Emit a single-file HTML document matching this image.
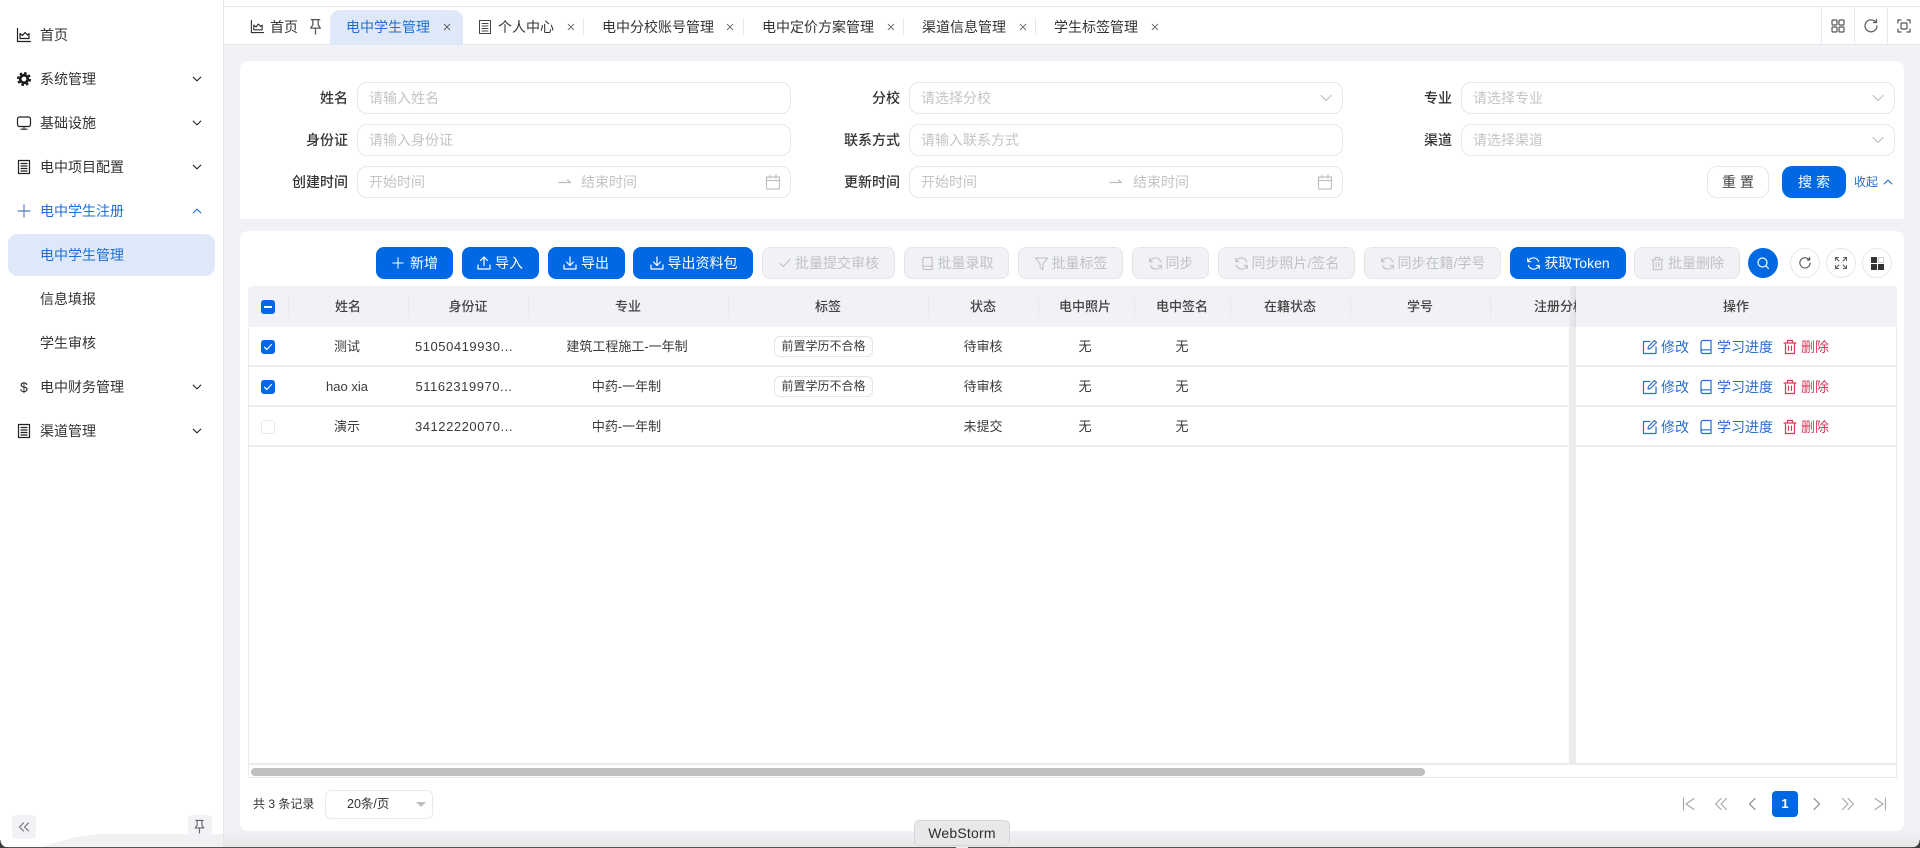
<!DOCTYPE html>
<html lang="zh-CN"><head><meta charset="utf-8"><title>电中学生管理</title>
<style>
html,body{margin:0;padding:0;width:1920px;height:848px;overflow:hidden;background:#f0f2f6}
body{position:relative;font-family:"Liberation Sans","Noto Sans CJK SC",sans-serif;font-size:14px;color:#333;filter:blur(.3px)}
.a{position:absolute}
.t{position:absolute;line-height:20px;height:20px;white-space:nowrap}
.c{transform:translateX(-50%)}
.r{transform:translateX(-100%)}
.m{font-weight:500}
svg.i{position:absolute;fill:none;stroke:currentColor;stroke-width:1.2;stroke-linecap:round;stroke-linejoin:round;overflow:visible}
.inp{position:absolute;height:30px;border:1px solid #e6e7ea;border-radius:10px;background:#fff;box-sizing:content-box}
.ph{color:#c4c4c4}
.b{position:absolute;top:247px;height:32px;box-sizing:border-box;border-radius:8px;display:flex;align-items:center;justify-content:center;gap:3px;background:#0068e3;color:#fff;line-height:1}
.b svg{position:static;flex:none}
.b svg.i{position:static}
.d{background:#f0f2f6;border:1px solid #e3e5e9;color:#c0c2c6}
.sep{position:absolute;width:1px;background:#e6e8ec}
.th{position:absolute;top:297px;line-height:20px;font-size:13px;font-weight:500;color:#444;transform:translateX(-50%);white-space:nowrap}
.td{position:absolute;line-height:20px;font-size:13px;color:#3a3a3a;transform:translateX(-50%);white-space:nowrap}
.tag{position:absolute;left:774px;width:99px;height:21px;box-sizing:border-box;border:1px solid #e4e5e8;border-radius:6px;background:#fff;font-size:12px;line-height:19px;text-align:center;color:#3a3a3a}
.blue{color:#2a6fca}.red{color:#d83c5c}
.line{position:absolute;left:249px;width:1647px;height:2px;background:#eceef1}
.cb{position:absolute;left:261px;width:14px;height:14px;border-radius:3px;background:#0068e3}
.rb{position:absolute;top:248px;width:28px;height:28px;border:1px solid #e6e7ea;border-radius:50%;background:#fff}
</style></head><body>
<svg width="0" height="0" style="position:absolute"><defs>
<symbol id="chart" viewBox="0 0 16 16"><path d="M1.500 1.500V14.500H14.500M4 11.500V6.500L6.500 8.500 9 5.500 11.500 8 13 6.500V11.500H4Z"/></symbol>
<symbol id="mon" viewBox="0 0 16 16"><rect x="1.500" y="2" width="13" height="9.500" rx="2"/><path d="M8 11.500V14M5 14.200H11"/></symbol>
<symbol id="doc" viewBox="0 0 16 16"><rect x="2.500" y="1.500" width="11" height="13"/><path d="M5 4.500H11M5 7H11M5 9.500H11M5 12H11"/></symbol>
<symbol id="plus" viewBox="0 0 16 16"><path d="M8 2V14M2 8H14"/></symbol>
<symbol id="dn" viewBox="0 0 16 16"><path d="M3 5.500 8 10.500 13 5.500"/></symbol>
<symbol id="up" viewBox="0 0 16 16"><path d="M3 10.500 8 5.500 13 10.500"/></symbol>
<symbol id="x" viewBox="0 0 10 10"><path d="M1.500 1.500 8.500 8.500M8.500 1.500 1.500 8.500"/></symbol>
<symbol id="pin" viewBox="0 0 16 16"><path d="M4 1.500H12M5.500 1.500V6.500L3.500 9.500H12.500L10.500 6.500V1.500M8 9.500V15"/></symbol>
<symbol id="ul" viewBox="0 0 16 16"><path d="M8 10.500V2M4.500 5.500 8 2 11.500 5.500M2 10V14H14V10"/></symbol>
<symbol id="dl" viewBox="0 0 16 16"><path d="M8 2V10.500M4.500 7 8 10.500 11.500 7M2 10V14H14V10"/></symbol>
<symbol id="ck" viewBox="0 0 16 16"><path d="M2.500 8.500 6 12 13.500 4"/></symbol>
<symbol id="book" viewBox="0 0 16 16"><path d="M3 3.500A2 2 0 0 1 5 1.500H13V14.500H5A2 2 0 0 1 3 12.500ZM3 12.500A2 2 0 0 1 5 10.800H13"/></symbol>
<symbol id="flt" viewBox="0 0 16 16"><path d="M1.500 2H14.500L9.500 8.500V14.500L6.500 12.500V8.500Z"/></symbol>
<symbol id="sync" viewBox="0 0 16 16"><path d="M13.500 6A6 6 0 0 0 3 4.500L1.800 6M2.500 10A6 6 0 0 0 13 11.500L14.200 10M1.800 2.500V6H5M14.200 13.500V10H11"/></symbol>
<symbol id="tr" viewBox="0 0 16 16"><path d="M3.500 4V14.500H12.500V4M2 4H14M5.500 4V1.500H10.500V4M6.500 7V11.500M9.500 7V11.500"/></symbol>
<symbol id="ed" viewBox="0 0 16 16"><path d="M14 8V14.500H1.500V2.500H8M6 10 6.500 7.500 12.500 1.500 14.500 3.500 8.500 9.500Z"/></symbol>
<symbol id="cal" viewBox="0 0 16 16"><rect x="1.500" y="3" width="13" height="12" rx="1"/><path d="M1.500 6.500H14.500M5 1V4M11 1V4"/></symbol>
</defs></svg>

<!-- top bar -->
<div class="a" style="left:223px;top:0;width:1697px;height:7px;background:#fff;border-bottom:1px solid #e5e7eb;box-sizing:border-box"></div>
<div class="a" style="left:223px;top:7px;width:1697px;height:38px;background:#fff;border-bottom:1px solid #e5e7eb;box-sizing:border-box"></div>

<!-- sidebar -->
<div class="a" style="left:0;top:0;width:223px;height:848px;background:#fff;border-right:1px solid #e4e6ea;box-sizing:content-box"></div>
<svg class="i" style="left:16px;top:27px;color:#222" width="16" height="16"><use href="#chart"/></svg>
<div class="t" style="left:40px;top:25px">首页</div>
<svg class="a" style="left:17px;top:72px" width="14" height="14" viewBox="0 0 14 14"><circle cx="7" cy="7" r="3.800" fill="none" stroke="#1d1d1d" stroke-width="2.800"/><circle cx="7" cy="7" r="6" fill="none" stroke="#1d1d1d" stroke-width="2" stroke-dasharray="2.600 2.100"/></svg>
<div class="t" style="left:40px;top:69px">系统管理</div>
<svg class="i" style="left:16px;top:115px;color:#222" width="16" height="16"><use href="#mon"/></svg>
<div class="t" style="left:40px;top:113px">基础设施</div>
<svg class="i" style="left:16px;top:159px;color:#222" width="16" height="16"><use href="#doc"/></svg>
<div class="t" style="left:40px;top:157px">电中项目配置</div>
<svg class="i" style="left:16px;top:203px;color:#557fbb" width="16" height="16"><use href="#plus"/></svg>
<div class="t" style="left:40px;top:201px;color:#1e6fd6">电中学生注册</div>
<div class="a" style="left:8px;top:234px;width:207px;height:42px;border-radius:10px;background:#dfe8f8"></div>
<div class="t" style="left:40px;top:245px;color:#1e6fd6">电中学生管理</div>
<div class="t" style="left:40px;top:289px">信息填报</div>
<div class="t" style="left:40px;top:333px">学生审核</div>
<div class="t" style="left:20px;top:377px;color:#222">$</div>
<div class="t" style="left:40px;top:377px">电中财务管理</div>
<svg class="i" style="left:16px;top:423px;color:#222" width="16" height="16"><use href="#doc"/></svg>
<div class="t" style="left:40px;top:421px">渠道管理</div>
<svg class="i" style="left:191px;top:73px;color:#222;stroke-width:1.500" width="12" height="12"><use href="#dn"/></svg>
<svg class="i" style="left:191px;top:117px;color:#222;stroke-width:1.500" width="12" height="12"><use href="#dn"/></svg>
<svg class="i" style="left:191px;top:161px;color:#222;stroke-width:1.500" width="12" height="12"><use href="#dn"/></svg>
<svg class="i" style="left:191px;top:205px;color:#1e6fd6;stroke-width:1.500" width="12" height="12"><use href="#up"/></svg>
<svg class="i" style="left:191px;top:381px;color:#222;stroke-width:1.500" width="12" height="12"><use href="#dn"/></svg>
<svg class="i" style="left:191px;top:425px;color:#222;stroke-width:1.500" width="12" height="12"><use href="#dn"/></svg>
<div class="a" style="left:40px;top:834px;width:183px;height:13px;background:#f0f1f3;clip-path:polygon(0 100%,35px 25%,60px 0,100% 0,100% 100%)"></div>
<div class="a" style="left:12px;top:815px;width:24px;height:24px;border-radius:4px;background:#f0f2f6"></div>
<svg class="i" style="left:19px;top:822px;color:#777" width="10" height="10" viewBox="0 0 10 10"><path d="M4.500 1 .5 5 4.500 9M9.500 1 5.500 5 9.500 9"/></svg>
<div class="a" style="left:188px;top:815px;width:24px;height:24px;border-radius:4px;background:#f0f2f6"></div>
<svg class="i" style="left:192px;top:819px;color:#666" width="15" height="15"><use href="#pin"/></svg>

<!-- tabs -->
<svg class="i" style="left:250px;top:19px;color:#333" width="15" height="15"><use href="#chart"/></svg>
<div class="t" style="left:270px;top:17px">首页</div>
<svg class="i" style="left:307px;top:18px;color:#555" width="17" height="17"><use href="#pin"/></svg>
<div class="a" style="left:330px;top:10px;width:133px;height:35px;border-radius:10px 10px 0 0;background:#dfe8f8"></div>
<div class="t" style="left:346px;top:17px;color:#1e6fd6">电中学生管理</div>
<svg class="i" style="left:443px;top:23px;color:#555" width="8" height="8"><use href="#x"/></svg>
<svg class="i" style="left:477px;top:19px;color:#444;stroke-width:1" width="16" height="16"><use href="#doc"/></svg>
<div class="t" style="left:498px;top:17px">个人中心</div>
<svg class="i" style="left:567px;top:23px;color:#666" width="8" height="8"><use href="#x"/></svg>
<div class="sep" style="left:583px;top:18px;height:17px"></div>
<div class="t" style="left:602px;top:17px">电中分校账号管理</div>
<svg class="i" style="left:726px;top:23px;color:#666" width="8" height="8"><use href="#x"/></svg>
<div class="sep" style="left:743px;top:18px;height:17px"></div>
<div class="t" style="left:762px;top:17px">电中定价方案管理</div>
<svg class="i" style="left:887px;top:23px;color:#666" width="8" height="8"><use href="#x"/></svg>
<div class="sep" style="left:903px;top:18px;height:17px"></div>
<div class="t" style="left:922px;top:17px">渠道信息管理</div>
<svg class="i" style="left:1019px;top:23px;color:#666" width="8" height="8"><use href="#x"/></svg>
<div class="sep" style="left:1035px;top:18px;height:17px"></div>
<div class="t" style="left:1054px;top:17px">学生标签管理</div>
<svg class="i" style="left:1151px;top:23px;color:#666" width="8" height="8"><use href="#x"/></svg>
<div class="sep" style="left:1821px;top:7px;height:37px"></div>
<div class="sep" style="left:1854px;top:7px;height:37px"></div>
<div class="sep" style="left:1887px;top:7px;height:37px"></div>
<svg class="i" style="left:1831px;top:19px;color:#555" width="14" height="14" viewBox="0 0 14 14"><rect x="1" y="1" width="5" height="5" rx="1"/><rect x="8" y="1" width="5" height="5" rx="1"/><rect x="1" y="8" width="5" height="5" rx="1"/><rect x="8" y="8" width="5" height="5" rx="1"/></svg>
<svg class="i" style="left:1864px;top:19px;color:#555" width="14" height="14" viewBox="0 0 14 14"><path d="M12 3.500A6 6 0 1 0 13 7M12.500 .5V3.500H9.500"/></svg>
<svg class="i" style="left:1897px;top:19px;color:#555" width="14" height="14" viewBox="0 0 14 14"><path d="M1 4V1H4M10 1H13V4M13 10V13H10M4 13H1V10"/><rect x="4" y="4" width="6" height="6" rx="1"/></svg>

<!-- search card -->
<div class="a" style="left:240px;top:61px;width:1664px;height:158px;background:#fff;border-radius:8px 8px 0 0"></div>
<div class="t m r" style="left:348px;top:88px">姓名</div>
<div class="t m r" style="left:348px;top:130px">身份证</div>
<div class="t m r" style="left:348px;top:172px">创建时间</div>
<div class="inp" style="left:357px;top:82px;width:432px"></div>
<div class="inp" style="left:357px;top:124px;width:432px"></div>
<div class="inp" style="left:357px;top:166px;width:432px"></div>
<div class="t ph" style="left:369px;top:88px">请输入姓名</div>
<div class="t ph" style="left:369px;top:130px">请输入身份证</div>
<div class="t ph" style="left:369px;top:172px">开始时间</div>
<svg class="i" style="left:559px;top:178px;color:#bbb" width="12" height="8" viewBox="0 0 12 8"><path d="M0 4.500H11.500L8.500 2"/></svg>
<div class="t ph" style="left:581px;top:172px">结束时间</div>
<svg class="i" style="left:765px;top:174px;color:#c0c0c0" width="16" height="16"><use href="#cal"/></svg>

<div class="t m r" style="left:900px;top:88px">分校</div>
<div class="t m r" style="left:900px;top:130px">联系方式</div>
<div class="t m r" style="left:900px;top:172px">更新时间</div>
<div class="inp" style="left:909px;top:82px;width:432px"></div>
<div class="inp" style="left:909px;top:124px;width:432px"></div>
<div class="inp" style="left:909px;top:166px;width:432px"></div>
<div class="t ph" style="left:921px;top:88px">请选择分校</div>
<div class="t ph" style="left:921px;top:130px">请输入联系方式</div>
<div class="t ph" style="left:921px;top:172px">开始时间</div>
<svg class="i" style="left:1110px;top:178px;color:#bbb" width="12" height="8" viewBox="0 0 12 8"><path d="M0 4.500H11.500L8.500 2"/></svg>
<div class="t ph" style="left:1133px;top:172px">结束时间</div>
<svg class="i" style="left:1317px;top:174px;color:#c0c0c0" width="16" height="16"><use href="#cal"/></svg>
<svg class="i" style="left:1318px;top:90px;color:#c0c0c0" width="16" height="16"><use href="#dn"/></svg>

<div class="t m r" style="left:1452px;top:88px">专业</div>
<div class="t m r" style="left:1452px;top:130px">渠道</div>
<div class="inp" style="left:1461px;top:82px;width:432px"></div>
<div class="inp" style="left:1461px;top:124px;width:432px"></div>
<div class="t ph" style="left:1473px;top:88px">请选择专业</div>
<div class="t ph" style="left:1473px;top:130px">请选择渠道</div>
<svg class="i" style="left:1870px;top:90px;color:#c0c0c0" width="16" height="16"><use href="#dn"/></svg>
<svg class="i" style="left:1870px;top:132px;color:#c0c0c0" width="16" height="16"><use href="#dn"/></svg>
<div class="a" style="left:1707px;top:166px;width:62px;height:32px;box-sizing:border-box;border:1px solid #e6e7ea;border-radius:10px;background:#fff;text-align:center;line-height:30px;letter-spacing:4px;text-indent:4px;color:#444">重置</div>
<div class="a" style="left:1782px;top:166px;width:64px;height:32px;border-radius:10px;background:#0068e3;color:#fff;text-align:center;line-height:32px;letter-spacing:4px;text-indent:4px">搜索</div>
<div class="t" style="left:1854px;top:172px;font-size:12px;color:#1e6fd6">收起</div>
<svg class="i" style="left:1882px;top:176px;color:#1e6fd6;stroke-width:1.500" width="12" height="12"><use href="#up"/></svg>

<!-- table card -->
<div class="a" style="left:240px;top:231px;width:1664px;height:600px;background:#fff;border-radius:8px 8px 8px 8px"></div>

<!-- toolbar -->
<div class="b" style="left:376px;width:77px;gap:5px"><svg class="i" width="14" height="14"><use href="#plus"/></svg><span>新增</span></div>
<div class="b" style="left:462px;width:77px;padding-right:2px"><svg class="i" width="16" height="16"><use href="#ul"/></svg><span>导入</span></div>
<div class="b" style="left:548px;width:77px;padding-right:2px"><svg class="i" width="16" height="16"><use href="#dl"/></svg><span>导出</span></div>
<div class="b" style="left:633px;width:120px"><svg class="i" width="16" height="16"><use href="#dl"/></svg><span>导出资料包</span></div>
<div class="b d" style="left:762px;width:133px"><svg class="i" width="14" height="14"><use href="#ck"/></svg><span>批量提交审核</span></div>
<div class="b d" style="left:904px;width:105px"><svg class="i" width="15" height="15"><use href="#book"/></svg><span>批量录取</span></div>
<div class="b d" style="left:1018px;width:105px"><svg class="i" width="15" height="15"><use href="#flt"/></svg><span>批量标签</span></div>
<div class="b d" style="left:1132px;width:77px"><svg class="i" width="15" height="15"><use href="#sync"/></svg><span>同步</span></div>
<div class="b d" style="left:1218px;width:137px"><svg class="i" width="15" height="15"><use href="#sync"/></svg><span>同步照片/签名</span></div>
<div class="b d" style="left:1364px;width:137px"><svg class="i" width="15" height="15"><use href="#sync"/></svg><span>同步在籍/学号</span></div>
<div class="b" style="left:1510px;width:116px"><svg class="i" width="15" height="15"><use href="#sync"/></svg><span>获取Token</span></div>
<div class="b d" style="left:1634px;width:106px"><svg class="i" width="15" height="15"><use href="#tr"/></svg><span>批量删除</span></div>
<div class="a" style="left:1748px;top:248px;width:30px;height:30px;border-radius:50%;background:#0068e3"></div>
<svg class="i" style="left:1757px;top:257px;color:#fff" width="12" height="12" viewBox="0 0 12 12"><circle cx="5.500" cy="5.500" r="4.500"/><path d="M9 9 11.500 11.500"/></svg>
<div class="rb" style="left:1790px"></div>
<svg class="i" style="left:1799px;top:257px;color:#444" width="12" height="12" viewBox="0 0 14 14"><path d="M12 3.500A6 6 0 1 0 13 7M12.500 .5V3.500H9.500"/></svg>
<div class="rb" style="left:1826px"></div>
<svg class="i" style="left:1835px;top:257px;color:#555;stroke-width:1" width="12" height="12" viewBox="0 0 12 12"><path d="M0.500 3.500V.5H3.500M.5 .5 4 4M11.500 3.500V.5H8.500M11.500 .5 8 4M.5 8.500V11.500H3.500M.5 11.500 4 8M11.500 8.500V11.500H8.500M11.500 11.500 8 8"/></svg>
<div class="rb" style="left:1862px"></div>
<svg class="a" style="left:1871px;top:257px" width="13" height="13" viewBox="0 0 13 13"><rect width="6" height="6" fill="#333"/><rect x="7.500" y=".5" width="5" height="5" fill="none" stroke="#888" stroke-width=".8" stroke-dasharray="1 1"/><rect y="7" width="6" height="6" fill="#333"/><rect x="7" y="7" width="6" height="6" fill="#333"/></svg>

<!-- table -->
<div class="a" style="left:248px;top:286px;width:1649px;height:492px;box-sizing:border-box;border:1px solid #e9ebef;border-top:0;border-radius:4px 4px 0 0"></div>
<div class="a" style="left:248px;top:286px;width:1649px;height:41px;background:#f0f2f6;border-radius:4px 4px 0 0"></div>
<div class="cb" style="top:300px"></div><div class="a" style="left:264px;top:306px;width:8px;height:2px;background:#fff"></div>
<div class="sep" style="left:288px;top:297px;height:20px"></div>
<div class="sep" style="left:408px;top:297px;height:20px"></div>
<div class="sep" style="left:528px;top:297px;height:20px"></div>
<div class="sep" style="left:728px;top:297px;height:20px"></div>
<div class="sep" style="left:928px;top:297px;height:20px"></div>
<div class="sep" style="left:1038px;top:297px;height:20px"></div>
<div class="sep" style="left:1134px;top:297px;height:20px"></div>
<div class="sep" style="left:1230px;top:297px;height:20px"></div>
<div class="sep" style="left:1350px;top:297px;height:20px"></div>
<div class="sep" style="left:1490px;top:297px;height:20px"></div>
<div class="th" style="left:348px">姓名</div>
<div class="th" style="left:468px">身份证</div>
<div class="th" style="left:628px">专业</div>
<div class="th" style="left:828px">标签</div>
<div class="th" style="left:983px">状态</div>
<div class="th" style="left:1085px">电中照片</div>
<div class="th" style="left:1182px">电中签名</div>
<div class="th" style="left:1290px">在籍状态</div>
<div class="th" style="left:1420px">学号</div>
<div class="th" style="left:1560px">注册分校</div>

<div class="line" style="top:365px"></div>
<div class="line" style="top:405px"></div>
<div class="line" style="top:445px"></div>

<div class="cb" style="top:340px"></div>
<svg class="i" style="left:263px;top:342px;color:#fff;stroke-width:2" width="10" height="10"><use href="#ck"/></svg>
<div class="cb" style="top:380px"></div>
<svg class="i" style="left:263px;top:382px;color:#fff;stroke-width:2" width="10" height="10"><use href="#ck"/></svg>
<div class="a" style="left:261px;top:420px;width:12px;height:12px;border:1px solid #e8e9ec;border-radius:3px;background:#fff"></div>

<div class="td" style="left:347px;top:337px">测试</div>
<div class="td" style="left:347px;top:377px">hao xia</div>
<div class="td" style="left:347px;top:417px">演示</div>
<div class="td" style="left:464px;top:337px;letter-spacing:.55px">51050419930...</div>
<div class="td" style="left:464px;top:377px;letter-spacing:.55px">51162319970...</div>
<div class="td" style="left:464px;top:417px;letter-spacing:.55px">34122220070...</div>
<div class="td" style="left:627px;top:337px">建筑工程施工-一年制</div>
<div class="td" style="left:626.500px;top:377px">中药-一年制</div>
<div class="td" style="left:626.500px;top:417px">中药-一年制</div>
<div class="tag" style="top:336px">前置学历不合格</div>
<div class="tag" style="top:376px">前置学历不合格</div>
<div class="td" style="left:983px;top:337px">待审核</div>
<div class="td" style="left:983px;top:377px">待审核</div>
<div class="td" style="left:983px;top:417px">未提交</div>
<div class="td" style="left:1085px;top:337px">无</div>
<div class="td" style="left:1085px;top:377px">无</div>
<div class="td" style="left:1085px;top:417px">无</div>
<div class="td" style="left:1182px;top:337px">无</div>
<div class="td" style="left:1182px;top:377px">无</div>
<div class="td" style="left:1182px;top:417px">无</div>

<!-- fixed column -->
<div class="a" style="left:1576px;top:286px;width:320px;height:41px;background:#f0f2f6;border-radius:0 4px 0 0"></div>
<div class="a" style="left:1569px;top:286px;width:7px;height:41px;background:linear-gradient(to right,rgba(0,0,0,.02),rgba(0,0,0,.08))"></div>
<div class="a" style="left:1569px;top:327px;width:7px;height:436px;background:#ebecee"></div>
<div class="th" style="left:1736px">操作</div>

<svg class="i blue" style="left:1642px;top:339px" width="16" height="16"><use href="#ed"/></svg>
<div class="t blue" style="left:1661px;top:337px">修改</div>
<svg class="i blue" style="left:1698px;top:339px" width="16" height="16"><use href="#book"/></svg>
<div class="t blue" style="left:1717px;top:337px">学习进度</div>
<svg class="i red" style="left:1782px;top:339px" width="16" height="16"><use href="#tr"/></svg>
<div class="t red" style="left:1801px;top:337px">删除</div>

<svg class="i blue" style="left:1642px;top:379px" width="16" height="16"><use href="#ed"/></svg>
<div class="t blue" style="left:1661px;top:377px">修改</div>
<svg class="i blue" style="left:1698px;top:379px" width="16" height="16"><use href="#book"/></svg>
<div class="t blue" style="left:1717px;top:377px">学习进度</div>
<svg class="i red" style="left:1782px;top:379px" width="16" height="16"><use href="#tr"/></svg>
<div class="t red" style="left:1801px;top:377px">删除</div>

<svg class="i blue" style="left:1642px;top:419px" width="16" height="16"><use href="#ed"/></svg>
<div class="t blue" style="left:1661px;top:417px">修改</div>
<svg class="i blue" style="left:1698px;top:419px" width="16" height="16"><use href="#book"/></svg>
<div class="t blue" style="left:1717px;top:417px">学习进度</div>
<svg class="i red" style="left:1782px;top:419px" width="16" height="16"><use href="#tr"/></svg>
<div class="t red" style="left:1801px;top:417px">删除</div>

<!-- scrollbar -->
<div class="a" style="left:249px;top:763px;width:1647px;height:2px;background:#e9ebef"></div>
<div class="a" style="left:251px;top:768px;width:1174px;height:8px;border-radius:4px;background:#bfbfbf"></div>

<!-- footer -->
<div class="t" style="left:253px;top:794px;font-size:12px;color:#333">共 3 条记录</div>
<div class="a" style="left:325px;top:790px;width:106px;height:27px;border:1px solid #e8e9ec;border-radius:6px;background:#fff"></div>
<div class="t" style="left:347px;top:794px;font-size:12.500px;color:#333">20条/页</div>
<div class="a" style="left:416px;top:802px;width:0;height:0;border-left:5px solid transparent;border-right:5px solid transparent;border-top:5px solid #bdbdbd"></div>
<svg class="i" style="left:1683px;top:798px;color:#aaa" width="12" height="12" viewBox="0 0 12 12"><path d="M.5 0V12M11 .5 3 6 11 11.500"/></svg>
<svg class="i" style="left:1715px;top:798px;color:#aaa" width="12" height="12" viewBox="0 0 12 12"><path d="M6 .5 .5 6 6 11.500M11.500 .5 6 6 11.500 11.500"/></svg>
<svg class="i" style="left:1749px;top:798px;color:#888" width="7" height="12" viewBox="0 0 7 12"><path d="M6 .5 .5 6 6 11.500"/></svg>
<div class="a" style="left:1772px;top:791px;width:26px;height:26px;border-radius:4px;background:#0068e3;color:#fff;text-align:center;line-height:26px;font-size:13px;font-weight:700">1</div>
<svg class="i" style="left:1813px;top:798px;color:#888" width="7" height="12" viewBox="0 0 7 12"><path d="M1 .5 6.500 6 1 11.500"/></svg>
<svg class="i" style="left:1842px;top:798px;color:#aaa" width="12" height="12" viewBox="0 0 12 12"><path d="M.5 .5 6 6 .5 11.500M6 .5 11.500 6 6 11.500"/></svg>
<svg class="i" style="left:1874px;top:798px;color:#aaa" width="12" height="12" viewBox="0 0 12 12"><path d="M11.500 0V12M1 .5 9 6 1 11.500"/></svg>

<!-- bottom edge / dock tooltip -->
<div class="a" style="left:224px;top:831px;width:1696px;height:16px;background:linear-gradient(#eef0f3,#e6e7e9)"></div>
<div class="a" style="left:1904px;top:61px;width:16px;height:770px;background:#f0f2f6"></div>
<div class="a" style="left:0;top:847px;width:1920px;height:1px;background:#555"></div>
<div class="a" style="left:0;top:840px;width:8px;height:8px;background:radial-gradient(circle at 100% 0,transparent 7px,#3c3c3c 8px)"></div>
<div class="a" style="right:0;top:840px;width:8px;height:8px;background:radial-gradient(circle at 0 0,transparent 7px,#3c3c3c 8px)"></div>
<div class="a" style="left:914px;top:820px;width:96px;height:26px;box-sizing:border-box;border:1px solid #d6d7d9;border-radius:5px;background:#e7e8e9;text-align:center;line-height:24px;color:#2d2d2d;letter-spacing:.2px">WebStorm</div>
<div class="a" style="left:956px;top:846px;width:12px;height:2px;background:#e7e8e9"></div>
</body></html>
